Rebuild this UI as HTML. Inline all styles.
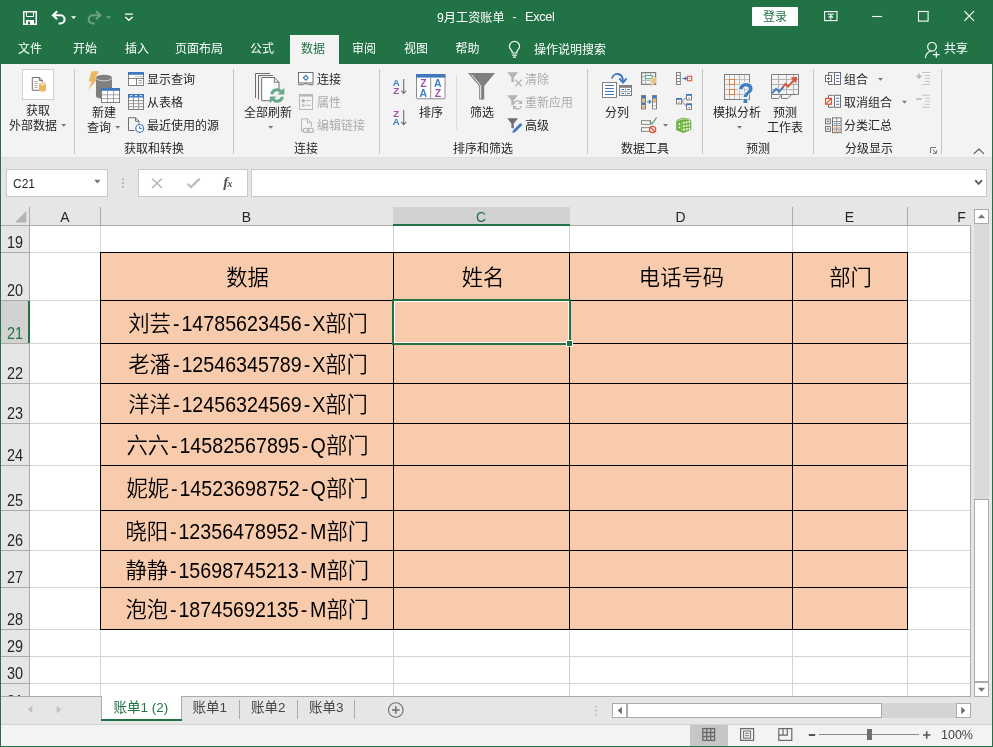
<!DOCTYPE html><html lang="zh-CN"><head><meta charset="utf-8"><title>9月工资账单 - Excel</title><style>
*{box-sizing:border-box;margin:0;padding:0}
html,body{width:993px;height:747px;overflow:hidden;background:#e6e6e6}
body{position:relative;font-family:"Liberation Sans","Noto Sans CJK SC",sans-serif;font-size:12px;color:#262626}
.ab{position:absolute}
.t{position:absolute;white-space:nowrap;line-height:16px}
.w{color:#fff}
.g{color:#ababab}
.c{text-align:center}
.sep{position:absolute;width:1px;background:#c6c6c6;top:69px;height:85px}
.cell{position:absolute;white-space:nowrap;text-align:center;font-size:21.33px;color:#000;font-weight:350;line-height:24px;letter-spacing:0}
.rh{z-index:3;position:absolute;left:1px;width:28px;text-align:center;font-size:16px;line-height:16px;color:#262626;transform:scaleX(.9)}
.ch{z-index:3;position:absolute;top:209px;text-align:center;font-size:15.5px;line-height:16px;color:#262626;transform:scaleX(.9)}

.la{display:inline-block;position:relative;height:24px;vertical-align:top}
.in{position:absolute;left:0;top:0;white-space:nowrap;transform-origin:0 0;transform:scaleX(.922)}
.in i{font-style:normal;margin:0 2.1px}
svg{position:absolute;overflow:visible}
#app{position:absolute;left:0;top:0;width:993px;height:747px;overflow:hidden;will-change:transform}
</style></head><body><div id="app">
<div class="ab" style="left:0;top:0;width:993px;height:64px;background:#217346"></div>
<div class="ab" style="left:0;top:64px;width:1px;height:683px;background:#217346"></div>
<div class="ab" style="left:992px;top:64px;width:1px;height:683px;background:#217346"></div>
<div class="ab" style="left:0;top:746px;width:993px;height:1px;background:#217346"></div>
<div class="t w" style="left:437px;top:10px;font-size:12.2px">9月工资账单</div>
<div class="t w" style="left:512.5px;top:9px;font-size:12.2px">-</div>
<div class="t w" style="left:525px;top:9px;font-size:12.8px;letter-spacing:-.35px">Excel</div>
<div class="ab" style="left:752px;top:7px;width:46px;height:19px;background:#fff;border-radius:1px"></div>
<div class="t" style="left:763px;top:9px;color:#217346">登录</div>
<div class="ab" style="left:290px;top:35px;width:49px;height:29px;background:#f3f3f3"></div>
<div class="t w" style="left:18px;top:41px">文件</div>
<div class="t w" style="left:73px;top:41px">开始</div>
<div class="t w" style="left:125px;top:41px">插入</div>
<div class="t w" style="left:175px;top:41px">页面布局</div>
<div class="t w" style="left:250px;top:41px">公式</div>
<div class="t w" style="left:352px;top:41px">审阅</div>
<div class="t w" style="left:404px;top:41px">视图</div>
<div class="t w" style="left:455.5px;top:41px">帮助</div>
<div class="t" style="left:301px;top:41px;color:#217346">数据</div>
<div class="t w" style="left:534px;top:42px">操作说明搜索</div>
<div class="t w" style="left:944px;top:41px">共享</div>
<div class="ab" style="left:1px;top:64px;width:991px;height:94px;background:#f3f3f3;border-bottom:1px solid #e0e0e0"></div>
<div class="sep" style="left:74px"></div>
<div class="sep" style="left:233px"></div>
<div class="sep" style="left:379px"></div>
<div class="sep" style="left:587px"></div>
<div class="sep" style="left:702px"></div>
<div class="sep" style="left:813px"></div>
<div class="sep" style="left:941px"></div>
<div class="sep" style="left:456px;top:75px;height:55px;background:#dcdcdc"></div>
<div class="t " style="left:26px;top:103px">获取</div>
<div class="t " style="left:9px;top:118px">外部数据</div>
<div class="t " style="left:92px;top:105px">新建</div>
<div class="t " style="left:87px;top:120px">查询</div>
<div class="t " style="left:147px;top:72px">显示查询</div>
<div class="t " style="left:147px;top:95px">从表格</div>
<div class="t " style="left:147px;top:118px">最近使用的源</div>
<div class="t " style="left:124px;top:141px">获取和转换</div>
<div class="t " style="left:244px;top:105px">全部刷新</div>
<div class="t " style="left:317px;top:72px">连接</div>
<div class="t g" style="left:317px;top:95px">属性</div>
<div class="t g" style="left:317px;top:118px">编辑链接</div>
<div class="t " style="left:294px;top:141px">连接</div>
<div class="t " style="left:419px;top:105px">排序</div>
<div class="t " style="left:470px;top:105px">筛选</div>
<div class="t g" style="left:525px;top:72px">清除</div>
<div class="t g" style="left:525px;top:95px">重新应用</div>
<div class="t " style="left:525px;top:118px">高级</div>
<div class="t " style="left:453px;top:141px">排序和筛选</div>
<div class="t " style="left:605px;top:105px">分列</div>
<div class="t " style="left:621px;top:141px">数据工具</div>
<div class="t " style="left:713px;top:105px">模拟分析</div>
<div class="t " style="left:773px;top:105px">预测</div>
<div class="t " style="left:767px;top:120px">工作表</div>
<div class="t " style="left:746px;top:141px">预测</div>
<div class="t " style="left:844px;top:72px">组合</div>
<div class="t " style="left:844px;top:95px">取消组合</div>
<div class="t " style="left:844px;top:118px">分类汇总</div>
<div class="t " style="left:845px;top:141px">分级显示</div>
<div class="ab" style="left:6px;top:169px;width:102px;height:28px;background:#fff;border:1px solid #c8c8c8"></div>
<div class="t" style="left:13px;top:176px;font-size:12px">C21</div>
<div class="ab" style="left:138px;top:169px;width:110px;height:28px;background:#fff;border:1px solid #c8c8c8"></div>
<div class="ab" style="left:251px;top:169px;width:736px;height:28px;background:#fff;border:1px solid #c8c8c8"></div>
<div class="ab" style="left:1px;top:207px;width:970px;height:490px;background:#e6e6e6"></div>
<div class="ab" style="left:30px;top:226px;width:940px;height:470px;background:#fff"></div>
<div class="ab" style="left:393px;top:207px;width:177px;height:19px;background:#d2d2d2;border-bottom:2px solid #217346;z-index:2"></div>
<div class="ab" style="left:1px;top:301px;width:29px;height:42px;background:#d2d2d2;border-right:2px solid #217346;z-index:2"></div>
<div class="ab" style="left:29px;top:207px;width:1px;height:19px;background:#ababab"></div>
<div class="ab" style="left:100px;top:207px;width:1px;height:19px;background:#ababab"></div>
<div class="ab" style="left:393px;top:207px;width:1px;height:19px;background:#ababab"></div>
<div class="ab" style="left:569px;top:207px;width:1px;height:19px;background:#ababab"></div>
<div class="ab" style="left:792px;top:207px;width:1px;height:19px;background:#ababab"></div>
<div class="ab" style="left:907px;top:207px;width:1px;height:19px;background:#ababab"></div>
<div class="ab" style="left:1px;top:225px;width:970px;height:1px;background:#ababab"></div>
<div class="ab" style="left:29px;top:226px;width:1px;height:470px;background:#ababab"></div>
<div class="ab" style="left:100px;top:226px;width:1px;height:470px;background:#d4d4d4"></div>
<div class="ab" style="left:393px;top:226px;width:1px;height:470px;background:#d4d4d4"></div>
<div class="ab" style="left:569px;top:226px;width:1px;height:470px;background:#d4d4d4"></div>
<div class="ab" style="left:792px;top:226px;width:1px;height:470px;background:#d4d4d4"></div>
<div class="ab" style="left:907px;top:226px;width:1px;height:470px;background:#d4d4d4"></div>
<div class="ab" style="left:970px;top:226px;width:1px;height:470px;background:#d4d4d4"></div>
<div class="ab" style="left:30px;top:252px;width:940px;height:1px;background:#d4d4d4"></div>
<div class="ab" style="left:1px;top:252px;width:28px;height:1px;background:#ababab"></div>
<div class="ab" style="left:30px;top:300px;width:940px;height:1px;background:#d4d4d4"></div>
<div class="ab" style="left:1px;top:300px;width:28px;height:1px;background:#ababab"></div>
<div class="ab" style="left:30px;top:343px;width:940px;height:1px;background:#d4d4d4"></div>
<div class="ab" style="left:1px;top:343px;width:28px;height:1px;background:#ababab"></div>
<div class="ab" style="left:30px;top:383px;width:940px;height:1px;background:#d4d4d4"></div>
<div class="ab" style="left:1px;top:383px;width:28px;height:1px;background:#ababab"></div>
<div class="ab" style="left:30px;top:423px;width:940px;height:1px;background:#d4d4d4"></div>
<div class="ab" style="left:1px;top:423px;width:28px;height:1px;background:#ababab"></div>
<div class="ab" style="left:30px;top:465px;width:940px;height:1px;background:#d4d4d4"></div>
<div class="ab" style="left:1px;top:465px;width:28px;height:1px;background:#ababab"></div>
<div class="ab" style="left:30px;top:510px;width:940px;height:1px;background:#d4d4d4"></div>
<div class="ab" style="left:1px;top:510px;width:28px;height:1px;background:#ababab"></div>
<div class="ab" style="left:30px;top:550px;width:940px;height:1px;background:#d4d4d4"></div>
<div class="ab" style="left:1px;top:550px;width:28px;height:1px;background:#ababab"></div>
<div class="ab" style="left:30px;top:587px;width:940px;height:1px;background:#d4d4d4"></div>
<div class="ab" style="left:1px;top:587px;width:28px;height:1px;background:#ababab"></div>
<div class="ab" style="left:30px;top:629px;width:940px;height:1px;background:#d4d4d4"></div>
<div class="ab" style="left:1px;top:629px;width:28px;height:1px;background:#ababab"></div>
<div class="ab" style="left:30px;top:656px;width:940px;height:1px;background:#d4d4d4"></div>
<div class="ab" style="left:1px;top:656px;width:28px;height:1px;background:#ababab"></div>
<div class="ab" style="left:30px;top:683px;width:940px;height:1px;background:#d4d4d4"></div>
<div class="ab" style="left:1px;top:683px;width:28px;height:1px;background:#ababab"></div>
<div class="ab" style="left:30px;top:696px;width:940px;height:1px;background:#d4d4d4"></div>
<div class="ab" style="left:1px;top:696px;width:28px;height:1px;background:#ababab"></div>
<div class="ab" style="left:1px;top:696px;width:970px;height:1px;background:#ababab"></div>
<div class="ab" style="left:970px;top:226px;width:1px;height:471px;background:#ababab"></div>
<div class="ab" style="left:100px;top:252px;width:808px;height:378px;background:#f8cbad;border:1px solid #000"></div>
<div class="ab" style="left:393px;top:252px;width:1px;height:378px;background:#000"></div>
<div class="ab" style="left:569px;top:252px;width:1px;height:378px;background:#000"></div>
<div class="ab" style="left:792px;top:252px;width:1px;height:378px;background:#000"></div>
<div class="ab" style="left:100px;top:300px;width:808px;height:1px;background:#000"></div>
<div class="ab" style="left:100px;top:343px;width:808px;height:1px;background:#000"></div>
<div class="ab" style="left:100px;top:383px;width:808px;height:1px;background:#000"></div>
<div class="ab" style="left:100px;top:423px;width:808px;height:1px;background:#000"></div>
<div class="ab" style="left:100px;top:465px;width:808px;height:1px;background:#000"></div>
<div class="ab" style="left:100px;top:510px;width:808px;height:1px;background:#000"></div>
<div class="ab" style="left:100px;top:550px;width:808px;height:1px;background:#000"></div>
<div class="ab" style="left:100px;top:587px;width:808px;height:1px;background:#000"></div>
<div class="ab" style="left:392px;top:299px;width:179px;height:46px;border:2px solid #217346"></div>
<div class="ab" style="left:394px;top:301px;width:175px;height:42px;border:1px solid #fff"></div>
<div class="ab" style="left:566px;top:340px;width:7px;height:7px;background:#217346;border:1px solid #fff"></div>
<div class="ch" style="left:30px;width:70px;color:#262626">A</div>
<div class="ch" style="left:100px;width:293px;color:#262626">B</div>
<div class="ch" style="left:393px;width:176px;color:#217346">C</div>
<div class="ch" style="left:569px;width:223px;color:#262626">D</div>
<div class="ch" style="left:792px;width:115px;color:#262626">E</div>
<div class="ch" style="left:953px;width:17px;color:#262626">F</div>
<div class="rh" style="top:235px;color:#262626">19</div>
<div class="rh" style="top:283px;color:#262626">20</div>
<div class="rh" style="top:326px;color:#217346">21</div>
<div class="rh" style="top:366px;color:#262626">22</div>
<div class="rh" style="top:406px;color:#262626">23</div>
<div class="rh" style="top:448px;color:#262626">24</div>
<div class="rh" style="top:493px;color:#262626">25</div>
<div class="rh" style="top:533px;color:#262626">26</div>
<div class="rh" style="top:570px;color:#262626">27</div>
<div class="rh" style="top:612px;color:#262626">28</div>
<div class="rh" style="top:639px;color:#262626">29</div>
<div class="rh" style="top:666px;color:#262626">30</div>
<div class="ab" style="left:1px;top:684px;width:28px;height:12px;overflow:hidden"><div class="rh" style="left:0;top:10px">31</div></div>
<div class="cell" style="left:101px;width:293px;top:266px">数据</div>
<div class="cell" style="left:395px;width:176px;top:266px">姓名</div>
<div class="cell" style="left:570px;width:223px;top:266px">电话号码</div>
<div class="cell" style="left:793px;width:115px;top:266px">部门</div>
<div class="cell" style="left:128.2px;top:312.0px;text-align:left">刘芸<span class="la" style="width:154.28px"><span class="in"><i>-</i>14785623456<i>-</i><b style="font-weight:normal;margin-left:0px">X</b></span></span>部门</div>
<div class="cell" style="left:128.2px;top:352.7px;text-align:left">老潘<span class="la" style="width:154.28px"><span class="in"><i>-</i>12546345789<i>-</i><b style="font-weight:normal;margin-left:0px">X</b></span></span>部门</div>
<div class="cell" style="left:128.2px;top:392.8px;text-align:left">洋洋<span class="la" style="width:154.28px"><span class="in"><i>-</i>12456324569<i>-</i><b style="font-weight:normal;margin-left:0px">X</b></span></span>部门</div>
<div class="cell" style="left:126.5px;top:433.7px;text-align:left">六六<span class="la" style="width:156.83px"><span class="in"><i>-</i>14582567895<i>-</i><b style="font-weight:normal;margin-left:0.4px">Q</b></span></span>部门</div>
<div class="cell" style="left:126.5px;top:477.0px;text-align:left">妮妮<span class="la" style="width:156.83px"><span class="in"><i>-</i>14523698752<i>-</i><b style="font-weight:normal;margin-left:0.4px">Q</b></span></span>部门</div>
<div class="cell" style="left:125.4px;top:519.7px;text-align:left">晓阳<span class="la" style="width:158.48px"><span class="in"><i>-</i>12356478952<i>-</i><b style="font-weight:normal;margin-left:1.0px">M</b></span></span>部门</div>
<div class="cell" style="left:125.4px;top:558.7px;text-align:left">静静<span class="la" style="width:158.48px"><span class="in"><i>-</i>15698745213<i>-</i><b style="font-weight:normal;margin-left:1.0px">M</b></span></span>部门</div>
<div class="cell" style="left:125.4px;top:597.8px;text-align:left">泡泡<span class="la" style="width:158.48px"><span class="in"><i>-</i>18745692135<i>-</i><b style="font-weight:normal;margin-left:1.0px">M</b></span></span>部门</div>
<div class="ab" style="left:974px;top:209px;width:15px;height:15px;background:#fff;border:1px solid #ababab"></div>
<div class="ab" style="left:974px;top:224px;width:15px;height:458px;background:#dadada"></div>
<div class="ab" style="left:974px;top:499px;width:15px;height:183px;background:#fff;border:1px solid #ababab"></div>
<div class="ab" style="left:974px;top:682px;width:15px;height:15px;background:#fff;border:1px solid #ababab"></div>
<div class="ab" style="left:101px;top:696px;width:81px;height:23px;background:#fff;border-left:1px solid #ababab;border-right:1px solid #ababab;z-index:2"></div>
<div class="ab" style="left:101px;top:719px;width:81px;height:2px;background:#217346"></div>
<div class="t" style="left:113.5px;top:700px;font-size:13.5px;color:#217346;z-index:3">账单1 (2)</div>
<div class="t" style="left:192.5px;top:700px;font-size:13.5px;color:#444">账单1</div>
<div class="t" style="left:251px;top:700px;font-size:13.5px;color:#444">账单2</div>
<div class="t" style="left:309px;top:700px;font-size:13.5px;color:#444">账单3</div>
<div class="ab" style="left:239px;top:700px;width:1px;height:19px;background:#ababab"></div>
<div class="ab" style="left:297px;top:700px;width:1px;height:19px;background:#ababab"></div>
<div class="ab" style="left:354px;top:700px;width:1px;height:19px;background:#ababab"></div>
<div class="ab" style="left:612px;top:703px;width:15px;height:15px;background:#fff;border:1px solid #ababab"></div>
<div class="ab" style="left:627px;top:703px;width:329px;height:15px;background:#d4d4d4"></div>
<div class="ab" style="left:627px;top:703px;width:255px;height:15px;background:#fff;border:1px solid #ababab"></div>
<div class="ab" style="left:956px;top:703px;width:15px;height:15px;background:#fff;border:1px solid #ababab"></div>
<div class="ab" style="left:1px;top:724px;width:991px;height:22px;background:#f3f3f3;border-top:1px solid #d4d4d4"></div>
<div class="ab" style="left:690px;top:725px;width:38px;height:21px;background:#c6c6c6"></div>
<div class="ab" style="left:819px;top:734px;width:100px;height:1px;background:#8a8a8a"></div>
<div class="ab" style="left:867px;top:729px;width:5px;height:11px;background:#6e6e6e"></div>
<div class="t" style="left:941px;top:727px;font-size:12.5px;color:#444">100%</div>
<svg width="993" height="747" viewBox="0 0 993 747" style="left:0;top:0"><g fill="none" stroke="#fff" stroke-width="1.5"><rect x="23.75" y="11.75" width="12.5" height="12.5"/><path d="M26.5 12v4.500h7v-4.500" stroke-width="1"/></g><rect x="26" y="20" width="8" height="5" fill="#fff"/><rect x="28" y="21.500" width="2" height="3" fill="#217346"/><g fill="none" stroke="#fff" stroke-width="2.1"><path d="M53 15.3H60.3A4.3 4.1 0 0 1 60.3 23.5H58.6" /><path d="M57.2 11.3L53 15.3L57.2 19.3"/></g><g fill="none" stroke="#fff" stroke-width="2.1" opacity=".33" transform="translate(153.3 0) scale(-1 1)"><path d="M53 15.3H60.3A4.3 4.1 0 0 1 60.3 23.5H58.6" /><path d="M57.2 11.3L53 15.3L57.2 19.3"/></g><path d="M71 16.2h5.2l-2.6 2.8z" fill="#fff"/><g opacity=".33"><path d="M106 16.2h5.2l-2.6 2.8z" fill="#fff"/></g><path d="M125 14.200H132.800M125.200 17L128.900 20.300L132.600 17" fill="none" stroke="#fff" stroke-width="1.3"/><g fill="none" stroke="#fff" stroke-width="1.1"><rect x="824.6" y="11.6" width="12.4" height="9"/><path d="M827.800 14.200h6"/><path d="M830.8 19.500V15.800M828.6 17.700L830.8 15.500L833 17.700"/><path d="M872 16.5H882"/><rect x="918.5" y="11.5" width="9.6" height="9.6"/><path d="M964.4 11.2L974 20.8M974 11.2L964.4 20.8" stroke-width="1.2"/></g><g fill="none" stroke="#fff" stroke-width="1.2"><path d="M512.2 53V52C512.2 50 509.4 49 509.4 46.4a5.1 5.1 0 0 1 10.2 0c0 2.600 -2.800 3.600 -2.800 5.600v1z"/><path d="M512.2 55.200h4.600M513 57.200h3"/></g><g fill="none" stroke="#fff" stroke-width="1.2"><circle cx="932" cy="46.8" r="4.300"/><path d="M925.3 58C925.8 54.5 928 52 930.5 51"/><path d="M933 54.6h6.600M936.3 51.400v6.400"/></g><rect x="22.5" y="69.500" width="31" height="30" fill="#fff" stroke="#d0d0d0"/><g fill="none" stroke="#6e6e6e" stroke-width="1"><path d="M39.300 77.500H32.300V90.300H39"/><path d="M39.300 77.500L42.300 80.500V82M39.300 77.500V80.500H42.300" /><path d="M34.300 81.500h3.500M34.300 83.500h3.500M34.300 85.500h3.500M34.300 87.500h3.500" stroke="#9a9a9a" stroke-width=".8"/></g><path d="M39 83.800V90a3.500 1.700 0 0 0 7 0V83.800z" fill="#e9b662"/><ellipse cx="42.500" cy="83.800" rx="3.500" ry="1.700" fill="#f3d7a2"/><path d="M61.2 124h5l-2.5 2.8z" fill="#777"/><path d="M91.500 71.300L98.800 71.300L95 78.200L98 78.200L88.300 90L91.800 81.500L88.600 81.500Z" fill="#e9b662"/><path d="M96 77.500V96a8 3 0 0 0 16 0V77.500z" fill="#7f7f7f"/><ellipse cx="104" cy="77.500" rx="8" ry="2.800" fill="#7f7f7f"/><path d="M96.300 78.200a7.700 2.600 0 0 0 15.400 0" fill="none" stroke="#d8d8d8" stroke-width=".9"/><rect x="101.500" y="88.500" width="18" height="14" fill="#fff" stroke="#7f7f7f"/><rect x="101" y="88" width="19" height="2.800" fill="#3f78bd"/><path d="M107.500 91v11M113.500 91v11M102 94.800h17M102 98.600h17" stroke="#9a9a9a" stroke-width=".9" fill="none"/><path d="M115.2 126h5l-2.5 2.8z" fill="#777"/><rect x="128.500" y="72.500" width="15" height="13" fill="#fff" stroke="#7f7f7f"/><rect x="128" y="72" width="16" height="2.800" fill="#3f78bd"/><path d="M129 78.500H143.500M136.500 78.500V85.500" stroke="#7f7f7f" stroke-width="1" fill="none"/><path d="M135.500 76.600h7" stroke="#8a8a8a" stroke-width="1" stroke-dasharray="1 1"/><path d="M138.500 80.600h3.600M138.500 82.900h3.600" stroke="#9a9a9a" stroke-width="1"/><rect x="128.500" y="94.500" width="15" height="15" fill="#fff" stroke="#7f7f7f"/><rect x="128" y="94" width="16" height="3.600" fill="#3f78bd"/><path d="M130 95.700h2.400M134.800 95.700h2.400M139.600 95.700h2.400" stroke="#fff" stroke-width="1"/><path d="M133.500 97.600v12M138.600 97.600v12M129 100.600h14M129 103.700h14M129 106.700h14" stroke="#8a8a8a" stroke-width=".9"/><g fill="none" stroke="#6e6e6e" stroke-width="1"><path d="M135.500 117.700H128.500V130.500H134.500M135.500 117.700L139 121.200V123.600M135.500 117.700V121.200H139"/></g><circle cx="139.700" cy="128.400" r="3.900" fill="#fff" stroke="#3f78bd" stroke-width="1.200"/><path d="M139.700 126v2.600h2.200" fill="none" stroke="#3f78bd" stroke-width="1"/><g fill="none" stroke="#6e6e6e" stroke-width="1"><path d="M255.500 98V73.500H270M258.500 99.500V75.500H273"/><path d="M274.300 77.500H261.700V100.700H271M274.300 77.500L279 82.200V89" fill="#fff"/><path d="M274.300 77.500V82.200H279"/></g><g fill="none" stroke="#65aa88" stroke-width="3"><path d="M271.700 94.300A5.400 5.400 0 0 1 281 91.600"/><path d="M282.400 96.700A5.400 5.400 0 0 1 273.100 99.400"/></g><path d="M284.300 87.800V94.500H277.600z" fill="#65aa88"/><path d="M269.800 103.200V96.500H276.500z" fill="#65aa88"/><path d="M268.2 126h5l-2.5 2.8z" fill="#777"/><rect x="298.500" y="72.500" width="14.500" height="10.400" fill="#fff" stroke="#6e6e6e"/><path d="M298 84.700H303.500L304.500 83.900H307.500L308.500 84.700H313.500" fill="none" stroke="#6e6e6e" stroke-width="1"/><path d="M305.800 74.500L309 77.700L305.800 80.900L302.600 77.700z" fill="#3f78bd"/><circle cx="305.800" cy="77.700" r="1.250" fill="#fff"/><rect x="299.500" y="94.500" width="13" height="15" fill="#f6f3f6" stroke="#b8b8b8"/><rect x="299" y="94" width="14" height="2.600" fill="#b8b8b8"/><circle cx="303.300" cy="100.700" r="1.300" fill="#b0b0b0" stroke="#b0b0b0"/><circle cx="303.300" cy="105.400" r="1.100" fill="none" stroke="#b0b0b0"/><path d="M306 100.700h4.600M306 105.400h4.600" stroke="#b0b0b0" stroke-width="1"/><g fill="none" stroke="#b8b8b8" stroke-width="1"><path d="M307.500 118.800H301.500V131H303M307.500 118.800L311.500 122.800V127M307.500 118.800V122.800H311.500" fill="#f6f3f6"/><rect x="303.200" y="128.400" width="5.800" height="4" rx="2" stroke-width="1.300"/><rect x="307.600" y="128.400" width="5.800" height="4" rx="2" stroke-width="1.300"/></g><text x="396.2" y="85.8" font-family="Liberation Sans, sans-serif" font-size="9.6" font-weight="bold" fill="#3e7fc1" text-anchor="middle">A</text><text x="396.2" y="93.6" font-family="Liberation Sans, sans-serif" font-size="9.6" font-weight="bold" fill="#9b4fa5" text-anchor="middle">Z</text><path d="M403.700 79V93M401.200 90.500L403.700 93.300L406.200 90.500" fill="none" stroke="#6e6e6e" stroke-width="1.100"/><text x="396.2" y="116.7" font-family="Liberation Sans, sans-serif" font-size="9.6" font-weight="bold" fill="#9b4fa5" text-anchor="middle">Z</text><text x="396.2" y="124.8" font-family="Liberation Sans, sans-serif" font-size="9.6" font-weight="bold" fill="#3e7fc1" text-anchor="middle">A</text><path d="M403.700 110V124.300M401.200 121.800L403.700 124.600L406.200 121.800" fill="none" stroke="#6e6e6e" stroke-width="1.100"/><rect x="416.500" y="74.500" width="28.500" height="24.300" rx="1" fill="#fff" stroke="#8a8a8a"/><rect x="416" y="74" width="29.400" height="3.600" fill="#3f78bd"/><path d="M430.700 77.600V98.800" stroke="#8a8a8a" stroke-width="1"/><text x="423.4" y="86.8" font-family="Liberation Sans, sans-serif" font-size="10.5" font-weight="bold" fill="#9b4fa5" text-anchor="middle">Z</text><text x="423.4" y="97" font-family="Liberation Sans, sans-serif" font-size="10.5" font-weight="bold" fill="#3e7fc1" text-anchor="middle">A</text><text x="437.9" y="86.8" font-family="Liberation Sans, sans-serif" font-size="10.5" font-weight="bold" fill="#3e7fc1" text-anchor="middle">A</text><text x="437.9" y="97" font-family="Liberation Sans, sans-serif" font-size="10.5" font-weight="bold" fill="#9b4fa5" text-anchor="middle">Z</text><path d="M468 73H495L484.200 86V99.600H479.200V86z" fill="#7f7f7f"/><path d="M471.600 74.600L480.700 85.600V98.600" fill="none" stroke="#f3f3f3" stroke-width="1"/><path d="M507.200 72.2H518L513.800 77.4V82.2H511.400V77.4z" fill="#b4b4b4"/><path d="M515.200 79.600L521.600 86.200M521.600 79.600L515.200 86.200" stroke="#b4b4b4" stroke-width="1.300" fill="none"/><path d="M507.200 95.3H518L513.800 100.5V105.3H511.400V100.5z" fill="#b4b4b4"/><g fill="none" stroke="#b4b4b4" stroke-width="1.300"><path d="M514 104A3.700 3.700 0 0 1 520.600 102.300"/><path d="M521.200 105.800A3.700 3.700 0 0 1 514.600 107.500"/></g><path d="M522.200 100V104H518.200z" fill="#b4b4b4"/><path d="M513 110V106H517z" fill="#b4b4b4"/><path d="M507.200 118.3H518L513.800 123.5V128.3H511.400V123.5z" fill="#6e6e6e"/><path d="M514.600 130.700L520.600 124.700" stroke="#3f78bd" stroke-width="2.800" stroke-linecap="round"/><path d="M512.300 133L513 130.300L514.900 132.200z" fill="#3f78bd"/><rect x="602.500" y="82.500" width="14" height="15" fill="#fff" stroke="#7f7f7f"/><path d="M605 85.500h9M605 88.500h9M605 91.500h9M605 94.500h9" stroke="#3f78bd" stroke-width="1"/><rect x="619.500" y="85.500" width="12" height="10" fill="#fff" stroke="#7f7f7f"/><rect x="619" y="85" width="13" height="2.800" fill="#7f7f7f"/><path d="M625.500 88v7.500M620 91.500h11" stroke="#b0b0b0" stroke-width="1"/><path d="M621.300 89.500h2.800M627 89.500h2.800M621.300 93.500h2.800M627 93.500h2.800" stroke="#3f78bd" stroke-width="1.100"/><path d="M611.900 78.600C613.500 72 623 72 623 81.500" fill="none" stroke="#3f78bd" stroke-width="1.800"/><path d="M619.300 78.400L623 82.600L626.700 78.400" fill="none" stroke="#3f78bd" stroke-width="1.900"/><path d="M645.500 73v11M650.500 73v3M642 76.500h13.500M642 80.500h9" fill="none" stroke="#b4b4b4" stroke-width=".9"/><rect x="641.600" y="72.600" width="14" height="11.800" fill="none" stroke="#7f7f7f" stroke-width="1.200"/><rect x="645.300" y="75.500" width="6.800" height="3.200" fill="#fff" stroke="#65aa88" stroke-width="1.100"/><path d="M653.200 77.800H657.300L654.600 81.200H656.600L650.200 87L652.400 82.600H650.400z" fill="#efc06e" stroke="#f3f3f3" stroke-width="1" paint-order="stroke"/><rect x="641.5" y="95.500" width="4" height="13.400" fill="#fff" stroke="#7f7f7f" stroke-width="1"/><rect x="642" y="96.0" width="3" height="2.700" fill="#3f78bd"/><rect x="642" y="99.2" width="3" height="2.700" fill="#e9b662"/><rect x="642" y="102.4" width="3" height="2.700" fill="#3f78bd"/><rect x="642" y="105.6" width="3" height="2.700" fill="#e9b662"/><rect x="652.5" y="95.500" width="4" height="13.400" fill="#fff" stroke="#7f7f7f" stroke-width="1"/><rect x="653" y="96.0" width="3" height="2.700" fill="#3f78bd"/><rect x="653" y="99.2" width="3" height="2.700" fill="#e9b662"/><rect x="653" y="102.4" width="3" height="2.700" fill="#fff"/><rect x="653" y="105.6" width="3" height="2.700" fill="#fff"/><path d="M652.500 102.400h4M652.500 105.600h4" stroke="#9a9a9a" stroke-width=".7"/><path d="M647 101.700h3.800M648.900 99.900l1.800 1.800l-1.800 1.800" fill="none" stroke="#3f78bd" stroke-width="1.100"/><rect x="641.500" y="120.700" width="9" height="3.600" fill="#fff" stroke="#7f7f7f"/><rect x="641.500" y="127.700" width="9" height="3.600" fill="#fff" stroke="#7f7f7f"/><path d="M649.500 121.500L652 124L656.600 117.600" fill="none" stroke="#65aa88" stroke-width="1.400"/><circle cx="652.600" cy="129.400" r="3.100" fill="#fff" stroke="#d9553a" stroke-width="1.300"/><path d="M650.500 127.300L654.700 131.500" stroke="#d9553a" stroke-width="1.300"/><path d="M663 124h5l-2.5 2.8z" fill="#777"/><rect x="676.500" y="72.500" width="3.800" height="12" fill="#fff" stroke="#7f7f7f"/><path d="M676.500 75.500h3.800M676.500 78.500h3.800M676.500 81.500h3.800" stroke="#7f7f7f" stroke-width=".9"/><path d="M682.300 78.500h4M684.800 76.800l1.700 1.700l-1.700 1.700" fill="none" stroke="#3f78bd" stroke-width="1.100"/><rect x="687.500" y="76.300" width="4.200" height="4.400" fill="#fff" stroke="#d9553a" stroke-width="1.100"/><rect x="689.100" y="78" width="1" height="1" fill="#d9553a"/><path d="M682 101.400L686 97.500M682 101.400L686 105.800" stroke="#7f7f7f" stroke-width="1" fill="none"/><rect x="676.5" y="98.5" width="5" height="5.400" fill="#fff" stroke="#7f7f7f"/><rect x="676" y="98" width="6" height="1.800" fill="#3f78bd"/><path d="M678 102h2" stroke="#7f7f7f" stroke-width=".8"/><rect x="686.5" y="94.5" width="5" height="5.400" fill="#fff" stroke="#7f7f7f"/><rect x="686" y="94" width="6" height="1.800" fill="#3f78bd"/><path d="M688 98h2" stroke="#7f7f7f" stroke-width=".8"/><rect x="686.5" y="104.0" width="5" height="5.400" fill="#fff" stroke="#7f7f7f"/><rect x="686" y="103.5" width="6" height="1.800" fill="#3f78bd"/><path d="M688 107.5h2" stroke="#7f7f7f" stroke-width=".8"/><path d="M676.200 121.800C676.600 117.600 688.500 115.600 691.300 120.800V129.800L683.300 133.100L676.200 130z" fill="#6aae3a"/><path d="M677.400 121.600C679.500 118.600 687.500 117.800 690.200 120.600" stroke="#d5ebc2" stroke-width=".9" fill="none"/><g fill="#eaf5df"><rect x="682.800" y="121.800" width="1.900" height="2.100"/><rect x="685.700" y="121.300" width="1.900" height="2.100"/><rect x="688.600" y="120.900" width="1.700" height="2.100"/><rect x="682.800" y="125.200" width="1.900" height="2.100"/><rect x="685.700" y="124.700" width="1.900" height="2.100"/><rect x="688.600" y="124.300" width="1.700" height="2.100"/><rect x="682.800" y="128.600" width="1.900" height="2.100"/><rect x="685.700" y="128.100" width="1.900" height="2.100"/><rect x="688.600" y="127.700" width="1.700" height="2.100"/><rect x="678.500" y="123" width="1.700" height="1.900"/><rect x="678.500" y="126.400" width="1.700" height="1.900"/></g><path d="M681.500 121.500V132.300" stroke="#8cc65f" stroke-width=".8"/><path d="M729.500 75v24.500M734.500 75v24.500M739.500 75v24.500M744.500 75v24.500M725 79.500h24.500M725 84.500h24.500M725 89.500h24.500M725 94.500h24.500" fill="none" stroke="#bdbdbd" stroke-width="1"/><rect x="724.500" y="74.500" width="25" height="25" fill="none" stroke="#7f7f7f" stroke-width="1"/><rect x="729.500" y="79.500" width="5" height="5" fill="#fff" stroke="#ed7d31" stroke-width="1"/><rect x="729.500" y="89.500" width="5" height="5" fill="#fff" stroke="#ed7d31" stroke-width="1"/><text x="0" y="102.700" transform="translate(745.800 0) scale(.93 1)" font-family="Liberation Sans, sans-serif" font-size="28.800" font-weight="bold" fill="#3e7fc1" stroke="#f3f3f3" stroke-width="1.800" paint-order="stroke" text-anchor="middle">?</text><path d="M737 126h5l-2.5 2.8z" fill="#777"/><path d="M778.500 75v19.500M786.500 75v19.500M793.500 75v19.500M772 79.500h26.500M772 84.500h26.500M772 89.500h26.500" fill="none" stroke="#b0b0b0" stroke-width="1"/><path d="M771.500 94.500V74.500H798.500V94.500H771.500V98.500H778.600L781.200 95.200M781.500 95V98.500H788L791.500 94.500" fill="none" stroke="#7f7f7f" stroke-width="1"/><path d="M772.200 93.200L776.100 88.800L779.200 91.600L783.400 86.800" fill="none" stroke="#3f78bd" stroke-width="1.900"/><path d="M783 87.200L785.300 84L788 86.600L794.500 79.300" fill="none" stroke="#d9553a" stroke-width="1.900"/><path d="M790.600 77.600L797.200 76.800L796.200 83.400z" fill="#d9553a"/><path d="M833.500 72.5H828.500V75.5M833.500 84.5H828.500V81.5" fill="none" stroke="#6e6e6e" stroke-width="1"/><rect x="834.500" y="72.5" width="6" height="12" fill="#fff" stroke="#6e6e6e"/><path d="M835.900 75.5h3.400M835.900 78.5h3.400M835.900 81.5h3.400" stroke="#3f78bd" stroke-width="1.100"/><rect x="825.500" y="75.5" width="6" height="6" fill="#fff" stroke="#6e6e6e" stroke-width="1"/><path d="M827 78.5h3M828.500 77v3" stroke="#6e6e6e" stroke-width="1"/><path d="M833.500 95.3H828.500V98.3M833.500 107.3H828.500V104.3" fill="none" stroke="#6e6e6e" stroke-width="1"/><rect x="834.500" y="95.3" width="6" height="12" fill="#fff" stroke="#6e6e6e"/><path d="M835.900 98.3h3.400M835.900 101.3h3.400M835.900 104.3h3.400" stroke="#3f78bd" stroke-width="1.100"/><rect x="825.600" y="98.39999999999999" width="5.800" height="5.800" fill="#fff" stroke="#d9553a" stroke-width="1.200"/><path d="M826.200 103.6L830.800 99.0" stroke="#d9553a" stroke-width="1.100"/><path d="M878 78h5l-2.5 2.8z" fill="#777"/><path d="M902 100.8h5l-2.5 2.8z" fill="#777"/><rect x="832.500" y="117.900" width="8.600" height="14.800" fill="#fff" stroke="#6e6e6e"/><path d="M836.800 118v14.600M832.500 121.600h8.600M832.500 125.300h8.600M832.500 129h8.600" stroke="#6e6e6e" stroke-width=".8"/><rect x="825.500" y="119" width="4.800" height="4.800" fill="#fff" stroke="#6e6e6e"/><rect x="825.500" y="126.600" width="4.800" height="4.800" fill="#fff" stroke="#6e6e6e"/><path d="M826.600 121.400h2.600M827.900 120.100v2.600M826.600 129h2.600M827.900 127.700v2.600" stroke="#6e6e6e" stroke-width=".8"/><path d="M834 123.500h1.600M838.200 123.500h1.600" stroke="#3f78bd" stroke-width="1.100"/><path d="M834 127.200h1.600M838.200 127.200h1.600M834 130.900h1.600M838.200 130.900h1.600" stroke="#ed7d31" stroke-width="1.100"/><path d="M922 72.5h8M924.800 75.5h5.200M924.800 78.5h5.200M924.800 81.5h5.200M922 84.5h8" stroke="#c6c6c6" stroke-width="1" fill="none"/><path d="M916.200 76.3h5.600" stroke="#b8b8b8" stroke-width="1.600"/><path d="M919 73.5v5.600" stroke="#b8b8b8" stroke-width="1.600"/><path d="M922 95.3h8M924.800 98.3h5.200M924.800 101.3h5.200M924.800 104.3h5.200M922 107.3h8" stroke="#c6c6c6" stroke-width="1" fill="none"/><path d="M916.200 99.1h5.600" stroke="#b8b8b8" stroke-width="1.600"/><path d="M930.500 153V147.500H936" fill="none" stroke="#777" stroke-width="1"/><path d="M932.600 149.600L936 153M936.400 150V153.400H933" fill="none" stroke="#777" stroke-width="1"/><path d="M973.800 153.800L978.900 149L984 153.800" fill="none" stroke="#555" stroke-width="1.100"/><path d="M94.2 179.8h6.4l-3.2 3.6z" fill="#777"/><g fill="#b0b0b0"><rect x="122.200" y="178.400" width="1.800" height="1.800"/><rect x="122.200" y="182.300" width="1.800" height="1.800"/><rect x="122.200" y="186.200" width="1.800" height="1.800"/></g><path d="M152 178.500L162 188M162 178.500L152 188" fill="none" stroke="#b4b4b4" stroke-width="1.500"/><path d="M187.600 183.800L191 187.200L199.600 178.600" fill="none" stroke="#bcbcbc" stroke-width="2.300"/><text x="223.300" y="186.800" font-family="Liberation Serif, serif" font-style="italic" font-weight="bold" font-size="15" fill="#555">f<tspan font-size="10.500" dy="0.600" dx="-1">x</tspan></text><path d="M975.200 180.300L978.600 183.900L982 180.300" fill="none" stroke="#666" stroke-width="2"/><path d="M26.300 211V222.400H15z" fill="#b4b4b4"/><path d="M977.800 218.300L981.500 214.300L985.200 218.300z" fill="#777"/><path d="M977.800 687.800L981.500 691.800L985.200 687.800z" fill="#777"/><path d="M621.800 706.800L617.800 710.500L621.800 714.200z" fill="#666"/><path d="M961.300 706.800L965.300 710.500L961.300 714.200z" fill="#666"/><g fill="#a0a0a0"><rect x="595.500" y="706" width="1.300" height="1.300"/><rect x="595.500" y="710" width="1.300" height="1.300"/><rect x="595.500" y="714" width="1.300" height="1.300"/></g><path d="M32.300 705.800L28 709.500L32.300 713.200z" fill="#c0c0c0"/><path d="M56.800 705.800L61.100 709.500L56.800 713.200z" fill="#c0c0c0"/><circle cx="395.800" cy="710" r="7.300" fill="none" stroke="#6e6e6e" stroke-width="1.100"/><path d="M392 710h7.600M395.800 706.200v7.600" stroke="#6e6e6e" stroke-width="1.500"/><g fill="none" stroke="#6a6a6a" stroke-width="1.300"><rect x="702.800" y="728.600" width="11.800" height="11.800"/><path d="M706.700 728.600v11.800M710.700 728.600v11.800M702.800 732.500h11.800M702.800 736.500h11.800"/></g><g fill="none" stroke="#6a6a6a" stroke-width="1.200"><rect x="740.600" y="728.600" width="13" height="11.800"/><rect x="743.600" y="731" width="7" height="7.200" stroke-width="1"/><path d="M745 733.300h4.200M745 735.700h4.200" stroke-width=".9"/></g><g fill="none" stroke="#6a6a6a" stroke-width="1.200"><rect x="778.800" y="728.600" width="13" height="11.800"/><path d="M783 728.600v6.500M787.300 728.600v6.500H778.800" /></g><path d="M808.800 735h6.400" stroke="#555" stroke-width="2"/><path d="M923 735h7.400M926.700 731.300v7.400" stroke="#555" stroke-width="1.600"/></svg>
</div></body></html>
